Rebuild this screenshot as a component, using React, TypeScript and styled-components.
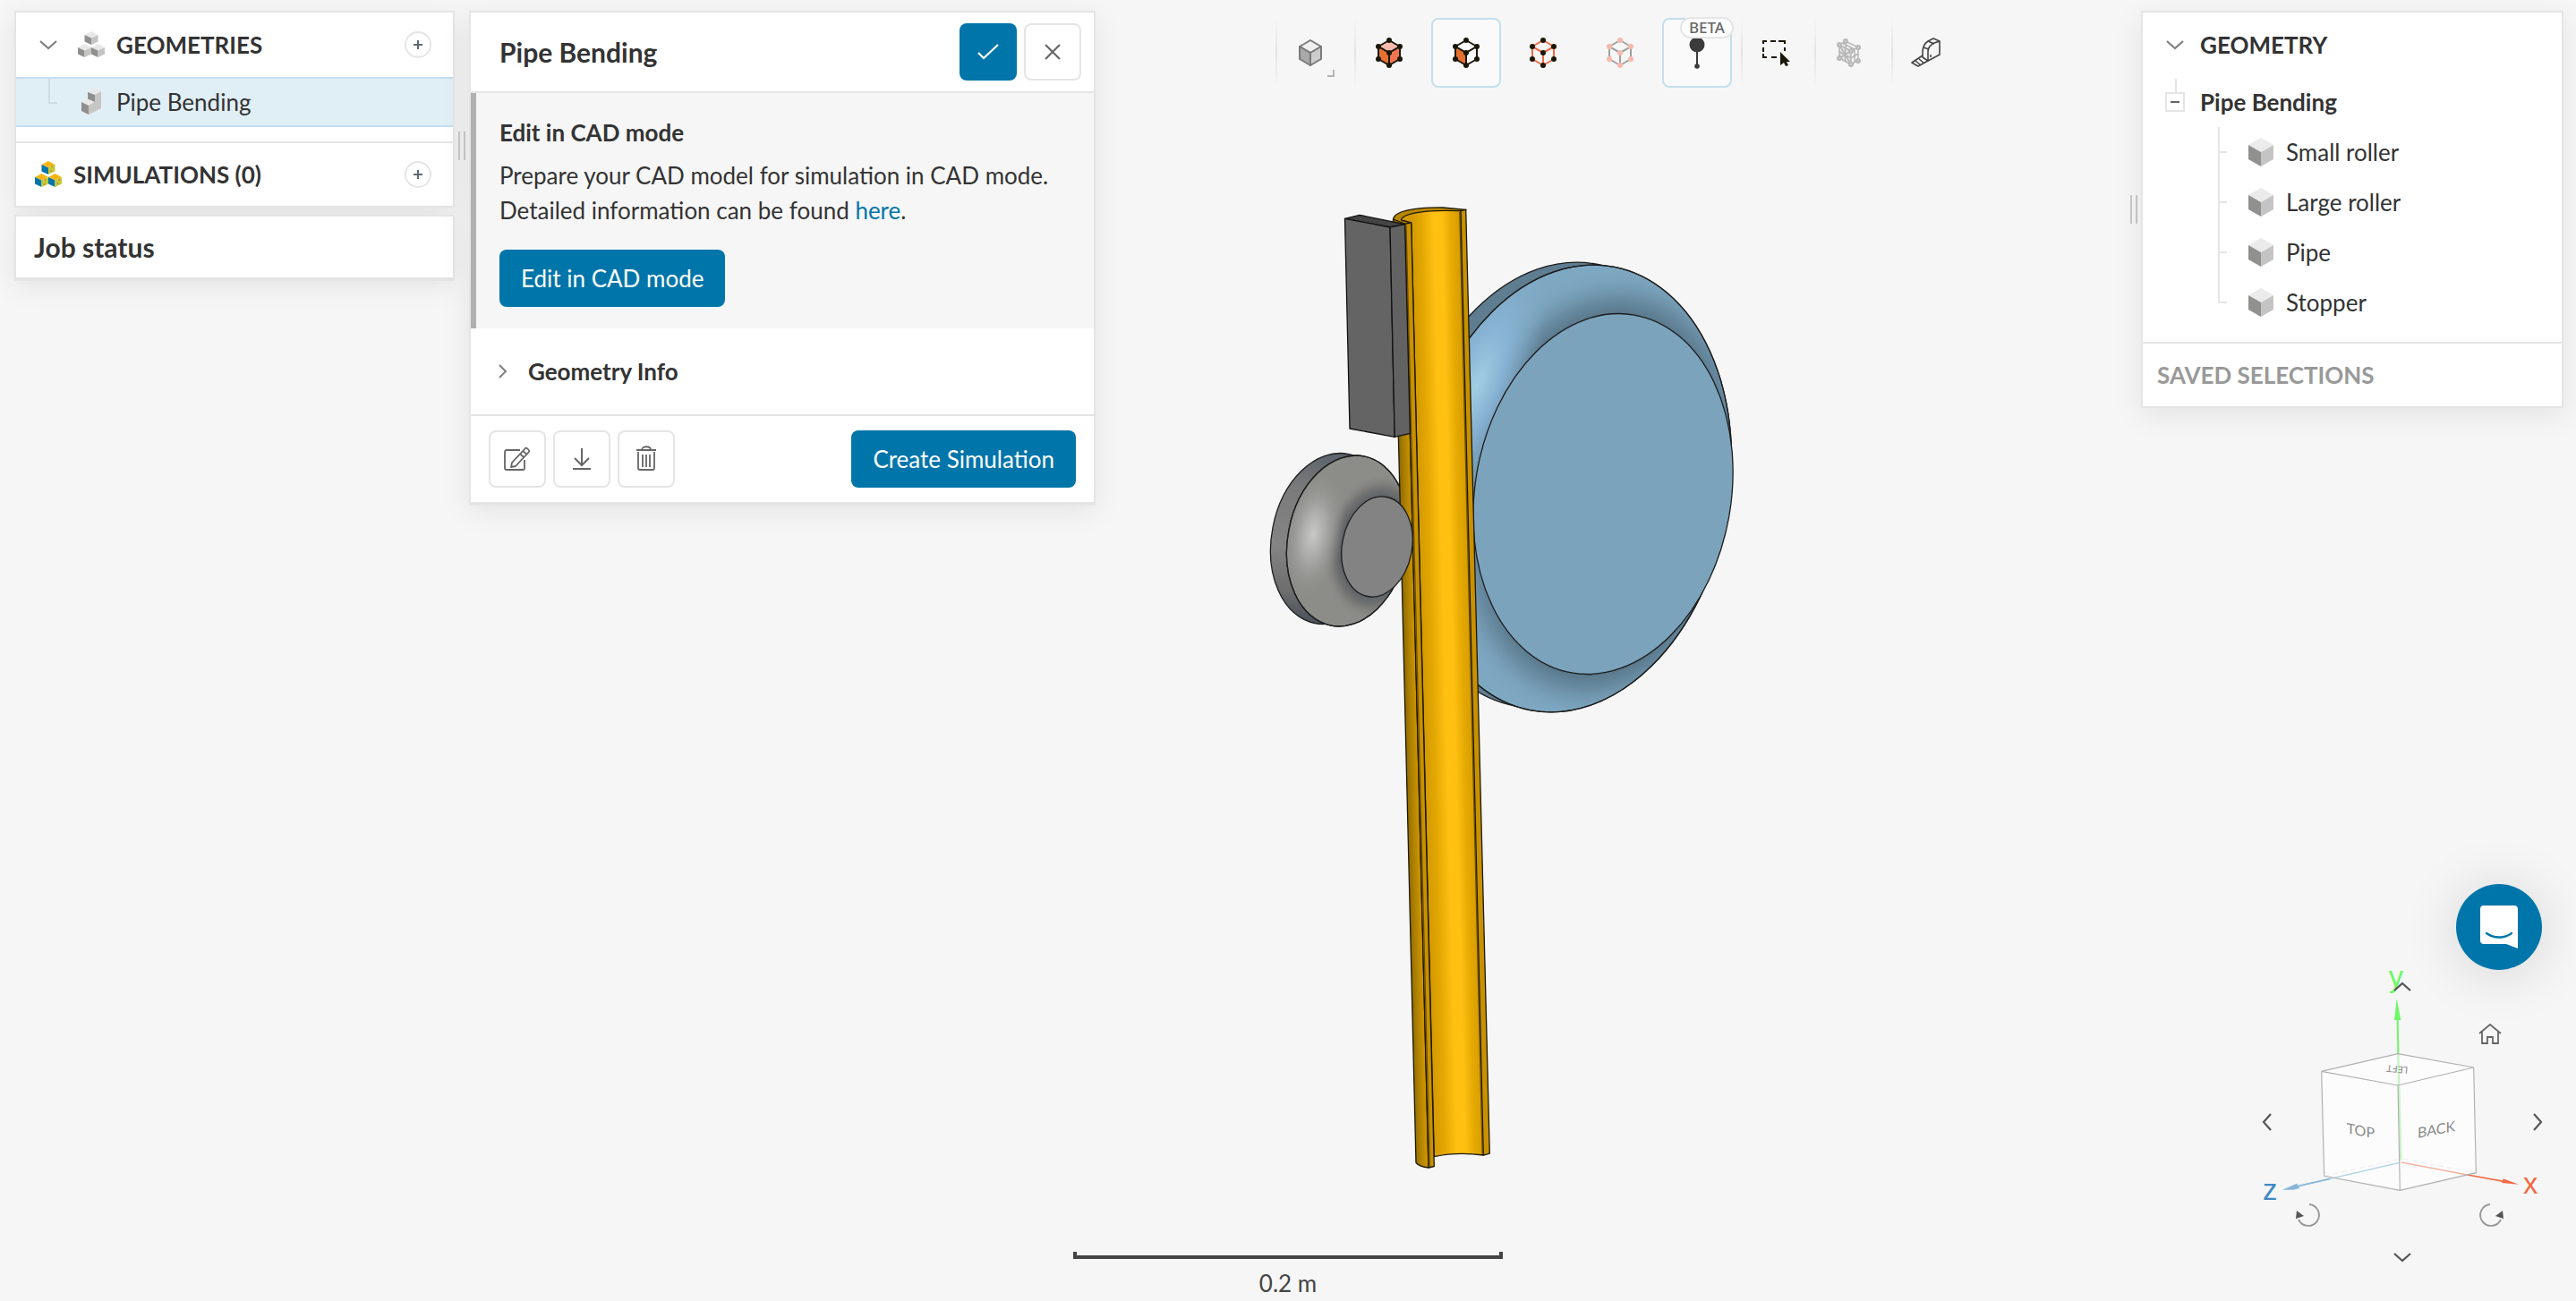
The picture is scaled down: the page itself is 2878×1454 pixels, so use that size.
import React from "react";
import styled, { createGlobalStyle, css } from "styled-components";

const c = {
  page: "#f6f6f6",
  line: "#e5e5e5",
  text: "#333333",
  muted: "#999999",
  icon: "#666666",
  blue: "#0075a9",
  selected: "#e0eef5",
  selectedLine: "#c3dfee",
};

const GlobalStyle = createGlobalStyle`
  *, *::before, *::after { box-sizing: border-box; }
  body {
    margin: 0;
    background: ${c.page};
    color: ${c.text};
    font-family: Lato, "Liberation Sans", sans-serif;
    font-size: 26px;
    line-height: 39px;
  }
  h1, h2, h3, p, ul { margin: 0; padding: 0; font-size: inherit; }
  ul { list-style: none; }
  button { font: inherit; color: inherit; cursor: pointer; }
  svg { display: block; }
`;

/* ---------- layout ---------- */

const Page = styled.div`
  position: relative;
  min-height: 100vh;
  display: flex;
  flex-direction: column;
  justify-content: space-between;
  overflow: hidden;
`;

const Scene = styled.div`
  position: absolute;
  inset: 0;
  svg { width: 100%; height: 100%; }
`;

const TopRow = styled.div`
  position: relative;
  display: flex;
  align-items: flex-start;
  padding: 12px 14px 0 16px;
`;

const Sidebar = styled.div`
  width: 492px;
  display: flex;
  flex-direction: column;
  gap: 8px;
`;

const Card = styled.section<{ $width?: number; $thick?: boolean }>`
  background: #fff;
  border: 2px solid ${c.line};
  box-shadow: ${(p) => (p.$thick ? `0 2px 0 ${c.line}, ` : "")}0 8px 32px rgba(0, 0, 0, 0.08);
  ${(p) => p.$width && css`width: ${p.$width}px; flex: none;`}
`;

const Resizer = styled.div`
  flex: none;
  width: 16px;
  height: 32px;
  margin-top: 135px;
  padding: 0 4px;
  display: flex;
  justify-content: space-between;
  &::before, &::after { content: ""; width: 2px; background: #c8c8c8; }
`;

const RightResizer = styled(Resizer)`
  margin-top: 206px;
`;

/* ---------- tree panels ---------- */

const PanelHead = styled.div<{ $top?: boolean; $height?: number }>`
  height: ${(p) => p.$height ?? 72}px;
  display: flex;
  align-items: center;
  gap: 12px;
  padding: 0 24px 0 20px;
  ${(p) => p.$top && css`border-top: 2px solid ${c.line};`}
`;

const Title = styled.h2<{ $size?: number }>`
  flex: 1;
  font-weight: 700;
  font-size: ${(p) => p.$size ?? 26}px;
`;

const IconSlot = styled.span`
  flex: none;
  width: 32px;
  height: 32px;
  display: grid;
  place-items: center;
`;

const PlainButton = styled.button`
  flex: none;
  width: 32px;
  height: 32px;
  padding: 0;
  border: 0;
  background: none;
  display: grid;
  place-items: center;
`;

const FoldButton = styled(PlainButton)<{ $after?: number }>`
  margin-right: ${(p) => p.$after ?? 0}px;
`;

const AddButton = styled.button`
  flex: none;
  width: 30px;
  height: 30px;
  padding: 0;
  border: 2px solid ${c.line};
  border-radius: 50%;
  background: #fff;
  display: grid;
  place-items: center;
`;

const SelectedRow = styled.div`
  height: 56px;
  margin-bottom: 16px;
  padding-left: 20px;
  display: flex;
  align-items: center;
  gap: 12px;
  background: ${c.selected};
  border: solid ${c.selectedLine};
  border-width: 2px 0;
`;

const Elbow = styled.span`
  align-self: flex-start;
  width: 10px;
  height: 28px;
  margin: 0 10px 0 16px;
  border: solid #cddce3;
  border-width: 0 0 2px 2px;
`;

const RootRow = styled.div`
  height: 56px;
  padding-left: 20px;
  display: flex;
  align-items: center;
  gap: 12px;
  font-weight: 700;
`;

const Collapse = styled.span`
  width: 32px;
  height: 56px;
  display: grid;
  place-items: center;
  background: linear-gradient(${c.line}, ${c.line}) 16px 2px / 2px 15px no-repeat;
`;

const CollapseButton = styled.button`
  width: 22px;
  height: 22px;
  padding: 0;
  border: 2px solid ${c.line};
  background: #fff;
  display: grid;
  place-items: center;
  &::before { content: ""; width: 10px; height: 2px; background: ${c.icon}; }
`;

const Parts = styled.ul`
  padding: 0 0 16px 84px;
`;

const Part = styled.li`
  height: 56px;
  display: flex;
  align-items: center;
  gap: 12px;
`;

const Branch = styled.span<{ $last: boolean }>`
  width: 10px;
  height: 56px;
  margin-right: 10px;
  background:
    linear-gradient(${c.line}, ${c.line}) 0 0 / 2px ${(p) => (p.$last ? "29px" : "100%")} no-repeat,
    linear-gradient(${c.line}, ${c.line}) 0 27px / 10px 2px no-repeat;
`;

const Saved = styled.div`
  height: 72px;
  padding-left: 16px;
  display: flex;
  align-items: center;
  border-top: 2px solid ${c.line};
  color: ${c.muted};
`;

/* ---------- properties panel ---------- */

const DialogHead = styled.div`
  display: flex;
  align-items: center;
  gap: 8px;
  padding: 12px 14px 12px 32px;
  border-bottom: 2px solid ${c.line};
`;

const buttonBase = css`
  height: 64px;
  border-radius: 8px;
  display: flex;
  align-items: center;
  justify-content: center;
`;

const PrimaryButton = styled.button<{ $square?: boolean }>`
  ${buttonBase}
  ${(p) => (p.$square ? css`width: 64px; padding: 0;` : css`padding: 0 24px;`)}
  border: 0;
  background: ${c.blue};
  color: #fff;
`;

const OutlineButton = styled.button`
  ${buttonBase}
  width: 64px;
  padding: 0;
  border: 2px solid ${c.line};
  background: #fff;
`;

const CadBox = styled.div`
  padding: 25px 26px 24px;
  border-left: 6px solid #b0b0b0;
  background: ${c.page};
`;

const CadTitle = styled.h3`
  margin-bottom: 9px;
  font-weight: 700;
`;

const CadText = styled.p`
  margin-bottom: 24px;
`;

const Link = styled.a`
  color: ${c.blue};
  text-decoration: none;
`;

const InfoToggle = styled.button`
  width: 100%;
  height: 96px;
  padding: 0 22px;
  display: flex;
  align-items: center;
  gap: 18px;
  border: 0;
  background: none;
  font-weight: 700;
`;

const DialogFoot = styled.div`
  display: flex;
  gap: 8px;
  padding: 16px 20px;
  border-top: 2px solid ${c.line};
`;

const Spacer = styled.span`
  flex: 1;
`;

/* ---------- toolbar ---------- */

const ToolbarArea = styled.div`
  flex: 1;
  display: flex;
  justify-content: center;
  padding: 8px 0 0 16px;
`;

const Toolbar = styled.div`
  display: flex;
`;

const ToolGroup = styled.div<{ $gap?: number }>`
  display: flex;
  gap: 8px;
  padding-right: ${(p) => p.$gap ?? 0}px;
  background: linear-gradient(rgba(225, 225, 225, 0), #e4e4e4 50%, rgba(225, 225, 225, 0)) 0 0 / 2px 100% no-repeat;
`;

const Tool = styled.button<{ $active?: boolean }>`
  position: relative;
  width: 78px;
  height: 78px;
  padding: 0;
  border: 2px solid ${(p) => (p.$active ? c.selectedLine : "transparent")};
  border-radius: 8px;
  background: ${(p) => (p.$active ? "#fafafa" : "none")};
  display: grid;
  place-items: center;
`;

const Corner = styled.span`
  position: absolute;
  right: 10px;
  bottom: 10px;
  width: 8px;
  height: 8px;
  border: solid #b5b5b5;
  border-width: 0 2px 2px 0;
`;

const Badge = styled.span`
  position: absolute;
  top: -3px;
  right: -4px;
  height: 24px;
  padding: 0 8px;
  border: 2px solid ${c.line};
  border-radius: 12px;
  background: #fff;
  color: ${c.icon};
  font: 500 17px/20px "Noto Sans", sans-serif;
`;

/* ---------- bottom row ---------- */

const BottomRow = styled.div`
  position: relative;
  display: grid;
  grid-template-columns: 1fr auto 1fr;
  align-items: end;
`;

const Scale = styled.div`
  grid-column: 2;
  width: 480px;
  text-align: center;
  color: #444;
  &::before {
    content: "";
    display: block;
    height: 8px;
    margin-bottom: 8px;
    border: solid #444;
    border-width: 0 4px 4px;
    background: ${c.page};
  }
`;

const Corner3D = styled.div`
  justify-self: end;
  padding: 0 34px 34px 0;
  display: flex;
  flex-direction: column;
  align-items: flex-end;
`;

const ChatButton = styled.button`
  width: 96px;
  height: 96px;
  margin-right: 4px;
  padding: 0;
  border: 0;
  border-radius: 50%;
  background: ${c.blue};
  box-shadow: 0 4px 64px rgba(0, 0, 0, 0.14);
  display: grid;
  place-items: center;
`;

const CubeWidget = styled.div`
  position: relative;
  width: 324px;
  height: 352px;
  margin-top: -16px;
`;

const CubeButton = styled(PlainButton)<{ $x: number; $y: number }>`
  position: absolute;
  left: ${(p) => p.$x - 16}px;
  top: ${(p) => p.$y}px;
`;

const AxisText = styled.text`
  font: 98px "Liberation Sans", sans-serif;
`;

const FaceText = styled.text<{ $size: number }>`
  font: ${(p) => p.$size}px Lato, sans-serif;
  fill: #8a8a8a;
  text-anchor: middle;
`;

/* ---------- icons ---------- */

const Chevron = ({ dir = "down", color = "#808080" }: { dir?: "up" | "down" | "left" | "right"; color?: string }) => {
  const d = { down: "M7 12l9 8 9-8", up: "M7 20l9-8 9 8", left: "M20 7l-8 9 8 9", right: "M12 7l8 9-8 9" }[dir];
  return (
    <svg width="32" height="32" viewBox="0 0 32 32" fill="none" stroke={color} strokeWidth="2.2" aria-hidden>
      <path d={d} />
    </svg>
  );
};

const Plus = () => (
  <svg width="10" height="10" viewBox="0 0 10 10" stroke="#5c6b73" strokeWidth="2" aria-hidden>
    <path d="M5 0v10M0 5h10" />
  </svg>
);

const MiniCube = ({ x, y, top, left, right }: { x: number; y: number; top: string; left: string; right: string }) => (
  <g transform={`translate(${x} ${y})`}>
    <path d="M0 4l7.5-4L15 4 7.5 7.5z" fill={top} />
    <path d="M0 4l7.5 3.5V15L0 11.5z" fill={left} />
    <path d="M15 4L7.500 7.500V15L15 11.500z" fill={right} />
  </g>
);

const CubesIcon = ({ color }: { color?: boolean }) => {
  const p = color
    ? { top: "#f7b512", left: "#0075a9", right: "#c3c93a" }
    : { top: "#e8e8e8", left: "#8f8f8d", right: "#c4c4c4" };
  return (
    <svg width="32" height="32" viewBox="0 0 32 32" aria-hidden>
      <MiniCube x={8.5} y={1} {...p} />
      <MiniCube x={1} y={15} {...p} />
      <MiniCube x={16} y={15} {...p} />
      {color && (
        <g fill="#d9573c">
          <circle cx="20" cy="7" r=".8" /><circle cx="19" cy="12" r=".8" /><circle cx="12.500" cy="22" r=".8" />
          <circle cx="11.500" cy="27" r=".8" /><circle cx="28" cy="22" r=".8" /><circle cx="26.500" cy="26" r=".8" />
        </g>
      )}
    </svg>
  );
};

const PartIcon = () => (
  <svg width="32" height="32" viewBox="0 0 32 32" aria-hidden>
    <path d="M12 5l7-4 8 3-7 4z" fill="#e8e8e8" />
    <path d="M12 5l8 3v12l-8-4z" fill="#8f8f8d" />
    <path d="M5 16l7-3.500 8 3.500-7 5z" fill="#e8e8e8" />
    <path d="M5 16l8 4v10l-8-4z" fill="#8f8f8d" />
    <path d="M27 4v19l-14 7V20l7-4V8z" fill="#c6c6c6" />
  </svg>
);

const BodyIcon = () => (
  <svg width="28" height="32" viewBox="0 0 28 32" aria-hidden>
    <path d="M14 0l14 8-14 8L0 8z" fill="#ebebeb" />
    <path d="M0 8l14 8v16L0 24z" fill="#90908e" />
    <path d="M28 8l-14 8v16l14-8z" fill="#c4c4c4" />
  </svg>
);

type CubeProps = { edge: string; dot?: string; top?: string; left?: string; right?: string };

const ToolCube = ({ edge, dot, top = "none", left = "none", right = "none" }: CubeProps) => (
  <svg width="32" height="36" viewBox="0 0 32 36" stroke={edge} strokeWidth="2" strokeLinejoin="round" aria-hidden>
    <path d="M16 4l12 7-12 7-12-7z" fill={top} />
    <path d="M4 11l12 7v14L4 25z" fill={left} />
    <path d="M28 11l-12 7v14l12-7z" fill={right} />
    {dot && (
      <g fill={dot} stroke="none">
        {[[16, 4], [4, 11], [28, 11], [16, 18], [4, 25], [28, 25], [16, 32]].map(([x, y]) => (
          <circle key={`${x}-${y}`} cx={x} cy={y} r="3" />
        ))}
      </g>
    )}
  </svg>
);

const PinIcon = () => (
  <svg width="20" height="36" viewBox="0 0 20 36" fill="#3c3c3c" aria-hidden>
    <circle cx="10" cy="9" r="8.500" />
    <path d="M9 16h2v16H9z" />
    <circle cx="10" cy="33" r="2.800" />
  </svg>
);

const BoxSelectIcon = () => (
  <svg width="32" height="32" viewBox="0 0 32 32" aria-hidden>
    <g fill="none" stroke="#1a1608" strokeWidth="2">
      <path d="M2 6V3h4M10 3h6M19 3h4M2 10v5M26 10v4M2 17v4h4M11 21h6" />
      <path d="M23 3h3v3" />
    </g>
    <path d="M21 15v15l4-3 2 4 3-1-2-4h4z" fill="#1a1608" />
  </svg>
);

const MeshIcon = () => (
  <svg width="28" height="34" viewBox="0 0 28 34" stroke="#b5b5b5" strokeWidth="1.500" fill="none" aria-hidden>
    <path d="M3 8l13 7v15L3 23z" fill="#e2e2e2" />
    <path d="M3 8l7-4 14 7-8 4M24 11v14l-8 5M3 16l13 7 8-5M9.500 11v16M3 8l13 22M3 23l13-8M10 4v8M20 13v14M6 6l14 7" />
    <g fill="#c8c8c8">
      <circle cx="10" cy="4" r="2.200" /><circle cx="3" cy="8" r="2.200" /><circle cx="24" cy="11" r="2.200" />
      <circle cx="16" cy="15" r="2.200" /><circle cx="3" cy="23" r="2.200" /><circle cx="24" cy="26" r="2.200" /><circle cx="16" cy="30" r="2.200" />
    </g>
  </svg>
);

const TapeIcon = () => (
  <svg width="34" height="34" viewBox="0 0 34 34" stroke="#444" strokeWidth="1.600" fill="none" strokeLinejoin="round" aria-hidden>
    <path d="M13 17C13 10 16 6 19 4l6-3 7 3v15l-13 7V16c0-5 3-8 7-10l6-2" />
    <path d="M19 4l7 3M13 17v5l6 4M14 11l6 2" />
    <path d="M13 20L1 28l7 4 11-6M5 26l5 4M9 24l5 4" />
    <path d="M22 19v3" />
  </svg>
);

const CheckIcon = () => (
  <svg width="24" height="20" viewBox="0 0 24 20" fill="none" stroke="#fff" strokeWidth="2.200" aria-hidden>
    <path d="M1 11l6 6L23 2" />
  </svg>
);

const CloseIcon = () => (
  <svg width="18" height="18" viewBox="0 0 18 18" stroke={c.icon} strokeWidth="2.200" aria-hidden>
    <path d="M1 1l16 16M17 1L1 17" />
  </svg>
);

const EditIcon = () => (
  <svg width="32" height="30" viewBox="0 0 32 30" fill="none" stroke={c.icon} strokeWidth="1.800" strokeLinejoin="round" aria-hidden>
    <path d="M19 5H4a2 2 0 0 0-2 2v18a2 2 0 0 0 2 2h18a2 2 0 0 0 2-2V16" />
    <path d="M25 3c1-1 5 2 4 4L14 23l-5 1 1-5zM22 6l5 4M19 9l4 4" />
  </svg>
);

const DownloadIcon = () => (
  <svg width="22" height="26" viewBox="0 0 22 26" fill="none" stroke={c.icon} strokeWidth="2" aria-hidden>
    <path d="M11 1v19M3 12l8 8 8-8M1 24h20" />
  </svg>
);

const TrashIcon = () => (
  <svg width="24" height="30" viewBox="0 0 24 30" fill="none" stroke={c.icon} strokeWidth="1.800" aria-hidden>
    <path d="M1 5h22M7 5c0-5 10-5 10 0M3 7v18a2 2 0 0 0 2 2h14a2 2 0 0 0 2-2V7M8 10v14M12 10v14M16 10v14" />
  </svg>
);

const HomeIcon = () => (
  <svg width="26" height="24" viewBox="0 0 26 24" fill="none" stroke={c.icon} strokeWidth="1.800" aria-hidden>
    <path d="M1 11L13 1l12 10M4 9v13h6v-7h6v7h6V9" />
  </svg>
);

const RotateIcon = ({ flip }: { flip?: boolean }) => (
  <svg width="30" height="28" viewBox="0 0 30 28" aria-hidden>
    <g transform={flip ? "translate(30 0) scale(-1 1)" : undefined}>
      <path d="M16 2a12 12 0 1 1-12 17" fill="none" stroke="#969696" strokeWidth="1.800" />
      <path d="M2 9l8 6-9 3z" fill="#555" />
    </g>
  </svg>
);

const ChatIcon = () => (
  <svg width="42" height="48" viewBox="0 0 42 48" aria-hidden>
    <path d="M4 0h34a4 4 0 0 1 4 4v44l-13-5H4a4 4 0 0 1-4-4V4a4 4 0 0 1 4-4z" fill="#fff" />
    <path d="M7 31c8 6 20 6 28 0" fill="none" stroke={c.blue} strokeWidth="2.400" strokeLinecap="round" />
  </svg>
);

/* ---------- drawings ---------- */

const Model = () => (
  <svg viewBox="0 0 2878 1454" role="img" aria-label="Pipe bending model">
    <defs>
      <linearGradient id="pipeIn" gradientUnits="userSpaceOnUse" x1="1576.700" y1="249" x2="1632" y2="247.600">
        <stop offset="0" stopColor="#d39a00" />
        <stop offset=".2" stopColor="#e3a703" />
        <stop offset=".45" stopColor="#ffc012" />
        <stop offset=".62" stopColor="#ffc012" />
        <stop offset=".8" stopColor="#e6aa03" />
        <stop offset="1" stopColor="#d49b00" />
      </linearGradient>
      <linearGradient id="pipeOut" gradientUnits="userSpaceOnUse" x1="1556.500" y1="249" x2="1570" y2="248.700">
        <stop offset="0" stopColor="#8a6600" />
        <stop offset=".5" stopColor="#ac8000" />
        <stop offset="1" stopColor="#cb9300" />
      </linearGradient>
      <radialGradient id="blueShade" gradientUnits="userSpaceOnUse" cx="0" cy="0" r="203.500" gradientTransform="scale(.9 1.250)">
        <stop offset=".78" stopColor="#4d6778" />
        <stop offset=".86" stopColor="#5d7c90" stopOpacity=".75" />
        <stop offset="1" stopColor="#7ba3bc" stopOpacity="0" />
      </radialGradient>
      <radialGradient id="blueLight" gradientUnits="userSpaceOnUse" cx="0" cy="0" r="1" gradientTransform="translate(1650 430) rotate(22) scale(56 150)">
        <stop offset="0" stopColor="#a3cfe4" />
        <stop offset=".45" stopColor="#8ab5d8" stopOpacity=".85" />
        <stop offset="1" stopColor="#82aecb" stopOpacity="0" />
      </radialGradient>
      <linearGradient id="blueFade" x1="0" y1="0" x2="0" y2="1">
        <stop offset="0" stopColor="#fff" />
        <stop offset=".3" stopColor="#999" />
        <stop offset=".5" stopColor="#333" />
        <stop offset=".7" stopColor="#999" />
        <stop offset="1" stopColor="#fff" />
      </linearGradient>
      <mask id="blueMask"><rect x="1560" y="290" width="400" height="520" fill="url(#blueFade)" /></mask>
      <clipPath id="rightOfPipe"><path d="M1620 220H1960V860H1640z" /></clipPath>
      <clipPath id="blueBody"><ellipse rx="175" ry="252" transform="translate(1756.500 546) rotate(10.500)" /></clipPath>
      <clipPath id="greyBody"><ellipse rx="66.700" ry="96.400" transform="translate(1505.500 604.500) rotate(11)" /></clipPath>
      <linearGradient id="greyRim" x1="0" y1="0" x2="0" y2="1">
        <stop offset="0" stopColor="#59616a" />
        <stop offset=".25" stopColor="#7b7b7b" />
        <stop offset=".6" stopColor="#848484" />
        <stop offset=".85" stopColor="#6d6d6d" />
        <stop offset="1" stopColor="#4a525a" />
      </linearGradient>
      <radialGradient id="greyLight" gradientUnits="userSpaceOnUse" cx="0" cy="0" r="1" gradientTransform="translate(1467 597) rotate(9) scale(34 72)">
        <stop offset="0" stopColor="#c8c8c8" />
        <stop offset=".4" stopColor="#a9a9a8" />
        <stop offset="1" stopColor="#8f8f8b" stopOpacity="0" />
      </radialGradient>
      <radialGradient id="greyShade" gradientUnits="userSpaceOnUse" cx="0" cy="0" r="1" gradientTransform="scale(60 84)">
        <stop offset=".62" stopColor="#535b63" />
        <stop offset=".78" stopColor="#6a6b6b" stopOpacity=".8" />
        <stop offset="1" stopColor="#8c8c88" stopOpacity="0" />
      </radialGradient>
    </defs>

    <g clipPath="url(#rightOfPipe)" stroke="#1d1d1d" strokeWidth="1.300">
      <ellipse rx="174" ry="251" transform="translate(1738 542) rotate(10.500)" fill="#5f7d91" />
      <ellipse rx="175" ry="252" transform="translate(1756.500 546) rotate(10.500)" fill="#7ea8c2" />
      <g clipPath="url(#blueBody)" stroke="none">
        <g mask="url(#blueMask)">
          <ellipse rx="190" ry="260" transform="translate(1791 552) rotate(9.900)" fill="url(#blueShade)" />
        </g>
        <rect x="1560" y="260" width="220" height="360" fill="url(#blueLight)" />
      </g>
      <ellipse rx="175" ry="252" transform="translate(1756.500 546) rotate(10.500)" fill="none" />
      <ellipse rx="143" ry="203" transform="translate(1791 552) rotate(9.900)" fill="#7ba3bc" />
    </g>

    <g stroke="#1d1d1d" strokeWidth="1.300">
      <ellipse rx="66.700" ry="96.400" transform="translate(1487.500 602) rotate(11)" fill="url(#greyRim)" />
      <ellipse rx="66.700" ry="96.400" transform="translate(1505.500 604.500) rotate(11)" fill="#8c8c88" />
      <g clipPath="url(#greyBody)" stroke="none">
        <ellipse rx="60" ry="84" transform="translate(1538.500 611) rotate(10.800)" fill="url(#greyShade)" />
        <rect x="1430" y="510" width="80" height="180" fill="url(#greyLight)" />
      </g>
      <ellipse rx="66.700" ry="96.400" transform="translate(1505.500 604.500) rotate(11)" fill="none" />
    </g>

    <g stroke="#1d1808" strokeWidth="1.300" strokeLinejoin="round">
      <path d="M1556.500 245C1558 236 1580 231.500 1612 232L1638 234.300 1634 240 1580 250 1566 252z" fill="#b98700" />
      <path d="M1556.500 245L1582 1299.500Q1586 1304 1596 1305L1569.500 250z" fill="url(#pipeOut)" />
      <path d="M1565.500 246C1566 239 1590 234 1632 235.700L1657.300 1291Q1628 1287 1602.300 1292.700L1576.700 249z" fill="url(#pipeIn)" />
      <path d="M1569.500 250.500L1576.700 248.700 1602.300 1303.500 1596 1305z" fill="#c89100" />
      <path d="M1632 235.700L1637.700 234.300 1664.300 1289 1657.300 1291z" fill="#c89100" />
      <path d="M1571 252L1597.300 1304M1630.800 237L1656.200 1290" stroke="#6b4e00" />
    </g>

    <g stroke="#111" strokeWidth="1.300" strokeLinejoin="round">
      <path d="M1502.500 244.300L1519 240.300 1569.600 250.700 1553 254z" fill="#444" />
      <path d="M1502.500 244.300L1553 254 1558.200 488.300 1508 479z" fill="#646464" />
      <path d="M1553 254L1569.600 250.700 1575.400 484.300 1558.200 488.300z" fill="#626262" />
    </g>
    <ellipse rx="39" ry="56.500" transform="translate(1538.500 611) rotate(10.800)" fill="#838383" stroke="#1d1d1d" strokeWidth="1.300" />
  </svg>
);

const CubeDrawing = () => (
  <svg width="324" height="352" viewBox="120 324 972 1056" role="img" aria-label="Orientation cube">
    <path d="M350 1063L610 1005 859 1052" fill="none" stroke="#c8c8c8" strokeWidth="3" strokeDasharray="18 12" />
    <path d="M341 712L597 653 851 699 859 1052 604 1111 350 1063z" fill="#fff" fillOpacity=".65" />
    <path d="M598 652L596 530" stroke="#6cf965" strokeWidth="6" />
    <path d="M598 653L607 1010" stroke="#c4f5c2" strokeWidth="7" />
    <path d="M593 468L585 540H607z" fill="#6cf965" />
    <path d="M602 1018L370 1072" stroke="#a9d1e8" strokeWidth="4" />
    <path d="M370 1072L262 1097" stroke="#86b5da" strokeWidth="5" />
    <path d="M210 1109L258 1088 268 1104 246 1109z" fill="#86b5da" />
    <path d="M608 1017L830 1059" stroke="#f5b3a2" strokeWidth="4" />
    <path d="M830 1059L950 1081" stroke="#f26a44" strokeWidth="5" />
    <path d="M1002 1091L950 1072 945 1086z" fill="#f26a44" />
    <g fill="none" stroke="#b0b0b0" strokeWidth="3.500">
      <path d="M341 712L597 653 851 699 597 759zM341 712L350 1063 604 1111 859 1052 851 699M597 759L604 1111" />
    </g>
    <AxisText x="566" y="428" fill="#6cf965">y</AxisText>
    <AxisText x="144" y="1143" fill="#3f88c5">z</AxisText>
    <AxisText x="1017" y="1123" fill="#f26a44">x</AxisText>
    <FaceText $size={48} transform="translate(472 928) skewY(10)">TOP</FaceText>
    <FaceText $size={48} transform="translate(726 924) skewY(-11)">BACK</FaceText>
    <FaceText $size={32} transform="translate(596 694) rotate(186)">LEFT</FaceText>
  </svg>
);

/* ---------- page ---------- */

const parts = ["Small roller", "Large roller", "Pipe", "Stopper"];

export default function App() {
  return (
    <Page>
      <GlobalStyle />
      <Scene><Model /></Scene>

      <TopRow>
        <Sidebar>
          <Card>
            <PanelHead>
              <FoldButton $after={4} aria-label="Collapse geometries"><Chevron /></FoldButton>
              <IconSlot><CubesIcon /></IconSlot>
              <Title>GEOMETRIES</Title>
              <AddButton aria-label="Add geometry"><Plus /></AddButton>
            </PanelHead>
            <SelectedRow>
              <Elbow />
              <IconSlot><PartIcon /></IconSlot>
              Pipe Bending
            </SelectedRow>
            <PanelHead $top>
              <IconSlot><CubesIcon color /></IconSlot>
              <Title>SIMULATIONS (0)</Title>
              <AddButton aria-label="Add simulation"><Plus /></AddButton>
            </PanelHead>
          </Card>
          <Card $thick>
            <PanelHead $height={68}>
              <Title $size={30}>Job status</Title>
            </PanelHead>
          </Card>
        </Sidebar>

        <Resizer role="separator" aria-orientation="vertical" />

        <Card $width={700} $thick>
          <DialogHead>
            <Title as="h1" $size={30}>Pipe Bending</Title>
            <PrimaryButton $square aria-label="Apply"><CheckIcon /></PrimaryButton>
            <OutlineButton aria-label="Close"><CloseIcon /></OutlineButton>
          </DialogHead>
          <CadBox>
            <CadTitle>Edit in CAD mode</CadTitle>
            <CadText>
              Prepare your CAD model for simulation in CAD mode.
              <br />
              Detailed information can be found <Link href="#cad">here</Link>.
            </CadText>
            <PrimaryButton>Edit in CAD mode</PrimaryButton>
          </CadBox>
          <InfoToggle>
            <svg width="24" height="24" viewBox="0 0 24 24" fill="none" stroke="#808080" strokeWidth="2" aria-hidden>
              <path d="M10 5l7 7-7 7" />
            </svg>
            <span>Geometry Info</span>
          </InfoToggle>
          <DialogFoot>
            <OutlineButton aria-label="Edit"><EditIcon /></OutlineButton>
            <OutlineButton aria-label="Download"><DownloadIcon /></OutlineButton>
            <OutlineButton aria-label="Delete"><TrashIcon /></OutlineButton>
            <Spacer />
            <PrimaryButton>Create Simulation</PrimaryButton>
          </DialogFoot>
        </Card>

        <ToolbarArea>
          <Toolbar role="toolbar" aria-label="View tools">
            <ToolGroup $gap={10}>
              <Tool aria-label="Render mode">
                <ToolCube edge="#7a7a7a" top="#efefef" left="#a9a9a9" right="#cdcdcd" />
                <Corner />
              </Tool>
            </ToolGroup>
            <ToolGroup $gap={10}>
              <Tool aria-label="Select volumes">
                <ToolCube edge="#1a1608" dot="#1a1608" top="#f7bcae" left="#e5712f" right="#f27450" />
              </Tool>
              <Tool $active aria-label="Select faces">
                <ToolCube edge="#1a1608" dot="#1a1608" top="#fff" left="#e5712f" right="#fff" />
              </Tool>
              <Tool aria-label="Select edges"><ToolCube edge="#f26a44" dot="#1a1608" /></Tool>
              <Tool aria-label="Select vertices"><ToolCube edge="#a0a0a0" dot="#f7b9aa" /></Tool>
              <Tool $active aria-label="Probe">
                <PinIcon />
                <Badge>BETA</Badge>
              </Tool>
            </ToolGroup>
            <ToolGroup $gap={4}>
              <Tool aria-label="Box select"><BoxSelectIcon /></Tool>
            </ToolGroup>
            <ToolGroup $gap={8}>
              <Tool aria-label="Mesh"><MeshIcon /></Tool>
            </ToolGroup>
            <ToolGroup>
              <Tool aria-label="Measure"><TapeIcon /></Tool>
            </ToolGroup>
          </Toolbar>
        </ToolbarArea>

        <RightResizer role="separator" aria-orientation="vertical" />

        <Card $width={472}>
          <PanelHead>
            <FoldButton aria-label="Collapse geometry"><Chevron /></FoldButton>
            <Title>GEOMETRY</Title>
          </PanelHead>
          <RootRow>
            <Collapse><CollapseButton aria-label="Collapse Pipe Bending" /></Collapse>
            Pipe Bending
          </RootRow>
          <Parts>
            {parts.map((name, i) => (
              <Part key={name}>
                <Branch $last={i === parts.length - 1} />
                <IconSlot><BodyIcon /></IconSlot>
                {name}
              </Part>
            ))}
          </Parts>
          <Saved><Title>SAVED SELECTIONS</Title></Saved>
        </Card>
      </TopRow>

      <BottomRow>
        <Scale>0.2 m</Scale>
        <Corner3D>
          <ChatButton aria-label="Open chat"><ChatIcon /></ChatButton>
          <CubeWidget>
            <CubeDrawing />
            <CubeButton $x={164} $y={19} aria-label="Rotate up"><Chevron dir="up" color="#555" /></CubeButton>
            <CubeButton $x={13} $y={170} aria-label="Rotate left"><Chevron dir="left" color="#555" /></CubeButton>
            <CubeButton $x={315} $y={170} aria-label="Rotate right"><Chevron dir="right" color="#555" /></CubeButton>
            <CubeButton $x={164} $y={321} aria-label="Rotate down"><Chevron dir="down" color="#555" /></CubeButton>
            <CubeButton $x={262} $y={72} aria-label="Home view"><HomeIcon /></CubeButton>
            <CubeButton $x={59} $y={274} aria-label="Roll left"><RotateIcon /></CubeButton>
            <CubeButton $x={263} $y={274} aria-label="Roll right"><RotateIcon flip /></CubeButton>
          </CubeWidget>
        </Corner3D>
      </BottomRow>
    </Page>
  );
}
